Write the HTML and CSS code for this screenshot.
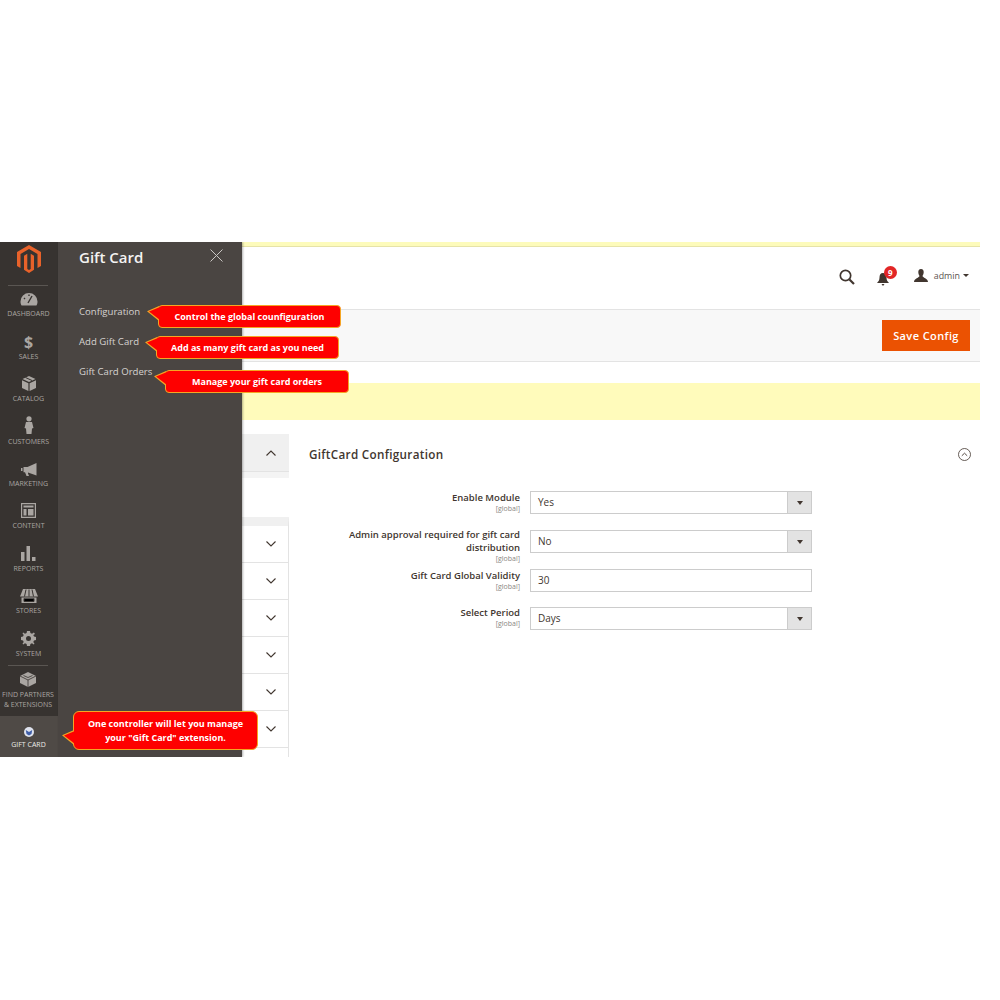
FILE: index.html
```html
<!DOCTYPE html>
<html lang="en">
<head>
    <meta charset="UTF-8">
    <meta name="viewport" content="width=device-width, initial-scale=1.0">
    <title>Gift Card Configuration</title>
    <link rel="stylesheet" href="styles.css">
</head>
<body>
    <div class="app">
        <!-- main admin rail -->
        <nav class="rail">
            <div class="logo">
                <svg width="24" height="28" viewBox="0 0 24 28"><path fill="#e8622a" d="M12 0 24 7V21L20.500 23V9L12 4 3.500 9V23L0 21V7Z"/><path fill="#e8622a" d="M13.700 8.800V24L12 25 10.300 24V8.800L7 10.800V24.800L12 28 17 24.800V10.800Z"/></svg>
            </div>
            <a class="rail-item">
                <svg class="rail-icon" width="18" height="14" viewBox="0 0 18 14"><path fill="#aaa6a2" d="M9 1a8.500 8.500 0 0 0-8.500 8.500c0 1.600.4 3 1.100 4h14.800c.7-1 1.100-2.400 1.100-4A8.500 8.500 0 0 0 9 1Z"/><path stroke="#373330" stroke-width="1.400" d="M8 11 12 4M4 6l1 1M9 2.500V4"/></svg>
                <span>Dashboard</span>
            </a>
            <a class="rail-item">
                <span class="dollar">$</span>
                <span>Sales</span>
            </a>
            <a class="rail-item">
                <svg class="rail-icon" width="14" height="15" viewBox="0 0 14 15"><path fill="#aaa6a2" d="M7 0 13.500 3 7 6 .5 3ZM0 4.200 6.400 7.200V15L0 12ZM14 4.200V12L7.600 15V7.200Z"/><path stroke="#373330" d="M3.500 1.500 10 4.500"/></svg>
                <span>Catalog</span>
            </a>
            <a class="rail-item">
                <svg class="rail-icon" width="10" height="18" viewBox="0 0 10 18"><circle cx="5" cy="2.800" r="2.600" fill="#aaa6a2"/><path fill="#aaa6a2" d="M2 6h6l1.500 6-1.500.5L7.500 18h-5L2 12.500.5 12Z"/></svg>
                <span>Customers</span>
            </a>
            <a class="rail-item">
                <svg class="rail-icon" width="16" height="13" viewBox="0 0 16 13"><path fill="#aaa6a2" d="M15.500 0V12.500L7 9.500V10.500L8 13H5.500L4 9.200H2.500V4H6.500ZM0 5H1.500V8H0Z"/></svg>
                <span>Marketing</span>
            </a>
            <a class="rail-item">
                <svg class="rail-icon" width="15" height="15" viewBox="0 0 15 15"><path fill="none" stroke="#aaa6a2" stroke-width="1.200" d="M.6.6H14.400V14.400H.6Z"/><path fill="#aaa6a2" d="M2.500 2.500H12.500V4.500H2.500ZM2.500 6H5.500V12.500H2.500ZM7 6H12.500V12.500H7Z"/></svg>
                <span>Content</span>
            </a>
            <a class="rail-item">
                <svg class="rail-icon" width="15" height="15" viewBox="0 0 15 15"><path fill="#aaa6a2" d="M0 6H3.500V15H0ZM5.500 0H9V15H5.500ZM11 11H14.500V15H11Z"/></svg>
                <span>Reports</span>
            </a>
            <a class="rail-item">
                <svg class="rail-icon" width="18" height="14" viewBox="0 0 18 14"><path fill="#aaa6a2" d="M3 0H15L18 7.500H0ZM1.500 8.500H16.500V14H1.500Z"/><path stroke="#373330" d="M6 .5 4.500 7.500M9 .5V7.500M12 .5 13.500 7.500M4 9.500V12.500H14V9.500"/></svg>
                <span>Stores</span>
            </a>
            <a class="rail-item">
                <svg class="rail-icon" width="15" height="15" viewBox="0 0 15 15"><path fill="#aaa6a2" fill-rule="evenodd" d="M6 0H9L9.400 2 11 2.700 12.800 1.500 13.500 2.200 14 3 12.300 4 13 5.600 15 6V9L13 9.400 12.300 11 13.500 12.800 12.800 13.500 11 12.300 9.400 13 9 15H6L5.600 13 4 12.300 2.200 13.500 1.500 12.800 2.700 11 2 9.400 0 9V6L2 5.600 2.700 4 1.500 2.200 2.200 1.500 4 2.700 5.600 2ZM7.500 5A2.500 2.500 0 1 0 7.500 10 2.500 2.500 0 0 0 7.500 5Z"/></svg>
                <span>System</span>
            </a>
            <a class="rail-item rail-partners">
                <svg class="rail-icon" width="16" height="15" viewBox="0 0 16 15"><path fill="#aaa6a2" d="M8 0 16 4V11L8 15 0 11V4Z"/><path stroke="#373330" stroke-width=".8" fill="none" d="M0 4 8 8 16 4M8 8V15M3.500 3.500 8 5.500 12.500 3.500"/></svg>
                <span>Find Partners<br>&amp; Extensions</span>
            </a>
            <a class="rail-item rail-active">
                <svg class="rail-icon" width="10" height="10" viewBox="0 0 10 10"><circle cx="5" cy="5" r="5" fill="#dfe3ee"/><path fill="#3f5ea8" d="M1.800 3 5 5 8.200 3 7.500 7 5 8.500 2.500 7Z"/></svg>
                <span>Gift Card</span>
            </a>
        </nav>

        <!-- opened gift card menu -->
        <aside class="panel">
            <div class="panel-head">
                <h2>Gift Card</h2>
                <svg width="13" height="13" viewBox="0 0 13 13"><path stroke="#c9c6c3" stroke-width="1" d="M.5.5 12.500 12.500M12.500.5 .5 12.500"/></svg>
            </div>
            <ul class="panel-links">
                <li>Configuration</li>
                <li>Add Gift Card</li>
                <li>Gift Card Orders</li>
            </ul>
        </aside>

        <main class="main">
            <div class="strip"></div>
            <header class="topbar">
                <svg class="search" width="16" height="16" viewBox="0 0 16 16"><circle cx="6.500" cy="6.500" r="5.200" fill="none" stroke="#41362f" stroke-width="1.700"/><path stroke="#41362f" stroke-width="2.200" d="M10.500 10.500 15 15"/></svg>
                <div class="bell">
                    <svg width="12" height="14" viewBox="0 0 12 14"><path fill="#41362f" d="M6 1C3.500 1 2.500 3 2.500 5.500 2.500 8 1.500 9.500 0 11H12C10.500 9.500 9.500 8 9.500 5.500 9.500 3 8.500 1 6 1ZM4.500 12H7.500L6 14Z"/></svg>
                    <span class="badge">9</span>
                </div>
                <div class="user">
                    <svg width="14" height="13" viewBox="0 0 14 13"><path fill="#41362f" d="M7 0C5 0 4.200 1.500 4.300 3.200 4.400 5 5 6 5.500 7 5.500 8.500 0 9.500 0 13H14C14 9.500 8.500 8.500 8.500 7 9 6 9.600 5 9.700 3.200 9.800 1.500 9 0 7 0Z"/></svg>
                    <span>admin</span>
                    <i class="caret"></i>
                </div>
            </header>
            <div class="actions">
                <button class="save">Save Config</button>
            </div>
            <div class="notice"></div>
            <div class="columns">
                <div class="tabs">
                    <div class="tab-open">
                        <svg class="chev" width="10" height="6" viewBox="0 0 10 6"><path fill="none" stroke="#41362f" stroke-width="1.100" d="M.5 5.500 5 1 9.500 5.500"/></svg>
                    </div>
                    <div class="tab-foot"></div>
                    <div class="tab-list">
                        <div class="tab-row"><svg class="chev" width="10" height="6" viewBox="0 0 10 6"><path fill="none" stroke="#41362f" stroke-width="1.100" d="M.5.500 5 5 9.500.5"/></svg></div>
                        <div class="tab-row"><svg class="chev" width="10" height="6" viewBox="0 0 10 6"><path fill="none" stroke="#41362f" stroke-width="1.100" d="M.5.500 5 5 9.500.5"/></svg></div>
                        <div class="tab-row"><svg class="chev" width="10" height="6" viewBox="0 0 10 6"><path fill="none" stroke="#41362f" stroke-width="1.100" d="M.5.500 5 5 9.500.5"/></svg></div>
                        <div class="tab-row"><svg class="chev" width="10" height="6" viewBox="0 0 10 6"><path fill="none" stroke="#41362f" stroke-width="1.100" d="M.5.500 5 5 9.500.5"/></svg></div>
                        <div class="tab-row"><svg class="chev" width="10" height="6" viewBox="0 0 10 6"><path fill="none" stroke="#41362f" stroke-width="1.100" d="M.5.500 5 5 9.500.5"/></svg></div>
                        <div class="tab-row"><svg class="chev" width="10" height="6" viewBox="0 0 10 6"><path fill="none" stroke="#41362f" stroke-width="1.100" d="M.5.500 5 5 9.500.5"/></svg></div>
                        <div class="tab-row"></div>
                    </div>
                </div>
                <section class="config">
                    <div class="config-head">
                        <h3>GiftCard Configuration</h3>
                        <svg width="13" height="13" viewBox="0 0 13 13"><circle cx="6.500" cy="6.500" r="6" fill="none" stroke="#41362f" stroke-width=".8"/><path fill="none" stroke="#41362f" stroke-width=".9" d="M3.800 7.800 6.500 5.200 9.200 7.800"/></svg>
                    </div>
                    <div class="field field-first">
                        <div class="label"><b>Enable Module</b><small>[global]</small></div>
                        <div class="control select">Yes<span class="arrow"></span></div>
                    </div>
                    <div class="field field-tall">
                        <div class="label"><b>Admin approval required for gift card distribution</b><small>[global]</small></div>
                        <div class="control select">No<span class="arrow"></span></div>
                    </div>
                    <div class="field field-short">
                        <div class="label"><b>Gift Card Global Validity</b><small>[global]</small></div>
                        <div class="control">30</div>
                    </div>
                    <div class="field field-last">
                        <div class="label"><b>Select Period</b><small>[global]</small></div>
                        <div class="control select">Days<span class="arrow"></span></div>
                    </div>
                </section>
            </div>
        </main>

        <!-- red annotations drawn over the screenshot -->
        <div class="note note-config">Control the global counfiguration</div>
        <div class="note note-add">Add as many gift card as you need</div>
        <div class="note note-orders">Manage your gift card orders</div>
        <div class="note note-menu">One controller will let you manage<br>your "Gift Card" extension.</div>
    </div>
</body>
</html>
```

FILE: styles.css
```css
* {
    box-sizing: border-box;
}

body {
    margin: 0;
    padding-top: 242px;
    background: #fff;
    font-family: "Open Sans", Arial, sans-serif;
    color: #41362f;
}

.app {
    position: relative;
    display: flex;
    width: 980px;
    height: 515px;
    overflow: hidden;
}

/* rail */
.rail {
    width: 58px;
    flex: none;
    background: #373330;
    display: flex;
    flex-direction: column;
    align-items: center;
}

.logo {
    width: 100%;
    height: 37px;
    padding: 3px 1px 0 0;
    display: flex;
    justify-content: center;
    align-items: flex-start;
    position: relative;
    flex: none;
}

.logo::after {
    content: "";
    position: absolute;
    left: 8px;
    right: 10px;
    top: 43px;
    height: 1px;
    background: #5a5652;
}

.rail-item {
    width: 100%;
    height: 42.4px;
    flex: none;
    display: flex;
    flex-direction: column;
    align-items: center;
    justify-content: flex-end;
    padding: 0 1px 2px 0;
    font-size: 7px;
    line-height: 10px;
    text-transform: uppercase;
    text-align: center;
    color: #aaa6a2;
    white-space: nowrap;
}

.rail-icon {
    margin-bottom: 3px;
    flex: none;
}

.dollar {
    font-size: 16px;
    line-height: 18px;
    font-weight: 700;
    margin-bottom: 1px;
}

.rail-partners {
    height: 51px;
    border-top: 1px solid #5a5652;
    width: 40px;
    margin-left: -2px;
    margin-top: 4px;
    padding: 0 0 6px;
    font-size: 7px;
    line-height: 10px;
}

.rail-active {
    height: 41px;
    background: #4f4a46;
    color: #eceae8;
    padding-bottom: 7px;
}

/* menu panel */
.panel {
    width: 184px;
    flex: none;
    background: #4a4542;
    padding: 0 20px 0 21px;
    box-shadow: 1px 0 2px rgba(0, 0, 0, 0.3);
    position: relative;
    z-index: 1;
}

.panel-head {
    display: flex;
    justify-content: space-between;
    align-items: flex-start;
    height: 58px;
    padding-top: 5px;
    margin-right: -1px;
}

.panel-head svg {
    margin-top: 2px;
}

.panel-head h2 {
    margin: 0;
    font-size: 15px;
    line-height: 20px;
    font-weight: 600;
    color: #f4f3f2;
}

.panel-links {
    list-style: none;
    margin: 0;
    padding: 0;
    font-size: 9.600px;
    color: #d6d3d0;
}

.panel-links li {
    height: 30px;
    line-height: 24px;
}

/* main area */
.main {
    flex: 1;
    min-width: 0;
    display: flex;
    flex-direction: column;
}

.strip {
    height: 5px;
    background: #fdfbbb;
    border-bottom: 1px solid #e6e3a8;
    flex: none;
}

.topbar {
    height: 62px;
    flex: none;
    display: flex;
    align-items: center;
    justify-content: flex-end;
    padding: 0 11px 5px 0;
}

.search {
    margin-right: 22px;
    margin-top: 2px;
}

.bell {
    position: relative;
    width: 22px;
    height: 14px;
    margin-right: 15px;
    margin-top: 0;
}

.badge {
    position: absolute;
    left: 7px;
    top: -3px;
    width: 13px;
    height: 13px;
    border-radius: 50%;
    background: #e22626;
    color: #fff;
    font-size: 8px;
    font-weight: 700;
    line-height: 13px;
    text-align: center;
}

.user {
    display: flex;
    align-items: center;
    font-size: 8.900px;
    color: #5c5450;
}

.user span {
    margin-left: 6px;
}

.caret {
    width: 0;
    height: 0;
    margin-left: 3px;
    border: 3px solid transparent;
    border-top: 3px solid #41362f;
    border-bottom: 0;
}

.actions {
    height: 53px;
    flex: none;
    background: #f8f8f8;
    border-top: 1px solid #e3e3e3;
    border-bottom: 1px solid #e3e3e3;
    display: flex;
    align-items: center;
    justify-content: flex-end;
    padding: 0 10px 0 0;
}

.save {
    width: 88px;
    height: 31px;
    border: 0;
    padding: 0;
    background: #eb5202;
    color: #fff;
    font-family: inherit;
    font-size: 11px;
    font-weight: 600;
    letter-spacing: 0.4px;
}

.notice {
    height: 37px;
    flex: none;
    margin-top: 21px;
    background: #fffbbb;
}

.columns {
    flex: 1;
    display: flex;
    margin-top: 14px;
    min-height: 0;
}

/* left tabs, mostly under the menu panel */
.tabs {
    width: 47px;
    flex: none;
}

.tab-open {
    height: 37px;
    background: #f0f0f0;
    display: flex;
    align-items: center;
    justify-content: flex-end;
    padding-right: 13px;
}

.tab-foot {
    height: 7px;
    background: #f4f4f4;
    border-top: 1px solid #e3e3e3;
}

.tab-list {
    margin-top: 39px;
    border-top: 9px solid #f0f0f0;
    border-right: 1px solid #e3e3e3;
}

.tab-row {
    height: 37px;
    border-bottom: 1px solid #e3e3e3;
    display: flex;
    align-items: center;
    justify-content: flex-end;
    padding-right: 12px;
}

/* config form */
.config {
    flex: 1;
    margin-left: 20px;
    padding-right: 9px;
}

.config-head {
    height: 41px;
    padding-bottom: 2px;
    display: flex;
    align-items: center;
    justify-content: space-between;
}

.config-head svg {
    margin-top: 2px;
}

.config-head h3 {
    margin: 0;
    font-size: 11.700px;
    font-weight: 600;
    letter-spacing: 0.3px;
    color: #41362f;
}

.field {
    display: flex;
    align-items: flex-start;
}

.field-first {
    margin-top: 16px;
    height: 39px;
}

.field-tall {
    height: 39px;
}

.field-tall .label {
    margin-top: -2px;
}

.field-short {
    height: 38px;
}

.field-last .label {
    margin-top: -1px;
}

.label {
    width: 211px;
    flex: none;
    text-align: right;
    margin-right: 10px;
    font-size: 9.500px;
    line-height: 13px;
    color: #41362f;
}

.label b {
    display: block;
    font-weight: 600;
}

.label small {
    display: block;
    font-size: 7px;
    line-height: 9px;
    color: #8a8683;
}

.control {
    position: relative;
    width: 282px;
    height: 23px;
    border: 1px solid #cccccc;
    background: #fff;
    padding-left: 7px;
    font-size: 10px;
    line-height: 21px;
    color: #41362f;
}

.arrow {
    position: absolute;
    top: 0;
    right: 0;
    bottom: 0;
    width: 24px;
    background: #e3e3e3;
    border-left: 1px solid #cccccc;
}

.arrow::after {
    content: "";
    position: absolute;
    left: 9px;
    top: 9px;
    border: 3px solid transparent;
    border-top: 4px solid #41362f;
    border-bottom: 0;
}

/* annotations */
.note {
    position: absolute;
    z-index: 2;
    background: #fe0000;
    border: 1px solid #f5a623;
    border-radius: 4px;
    color: #fff;
    font-size: 9px;
    font-weight: 700;
    line-height: 14px;
    text-align: center;
    padding-top: 3.500px;
    white-space: nowrap;
}

.note::before,
.note::after {
    content: "";
    position: absolute;
    clip-path: polygon(100% 0, 0 35%, 100% 100%);
}

.note::before {
    left: -12px;
    top: 0;
    width: 12px;
    height: 15px;
    background: #f5a623;
}

.note::after {
    left: -10px;
    top: 1px;
    width: 11px;
    height: 13px;
    background: #fe0000;
}

.note-config {
    left: 158px;
    top: 63px;
    width: 183px;
    height: 23px;
}

.note-add {
    left: 156px;
    top: 94px;
    width: 183px;
    height: 23px;
}

.note-orders {
    left: 165px;
    top: 128px;
    width: 184px;
    height: 23px;
}

.note-menu {
    left: 73px;
    top: 469px;
    width: 185px;
    height: 39px;
    padding-top: 5px;
    border-radius: 6px;
}

.note-menu::before {
    top: 18px;
}

.note-menu::after {
    top: 19px;
}
```
